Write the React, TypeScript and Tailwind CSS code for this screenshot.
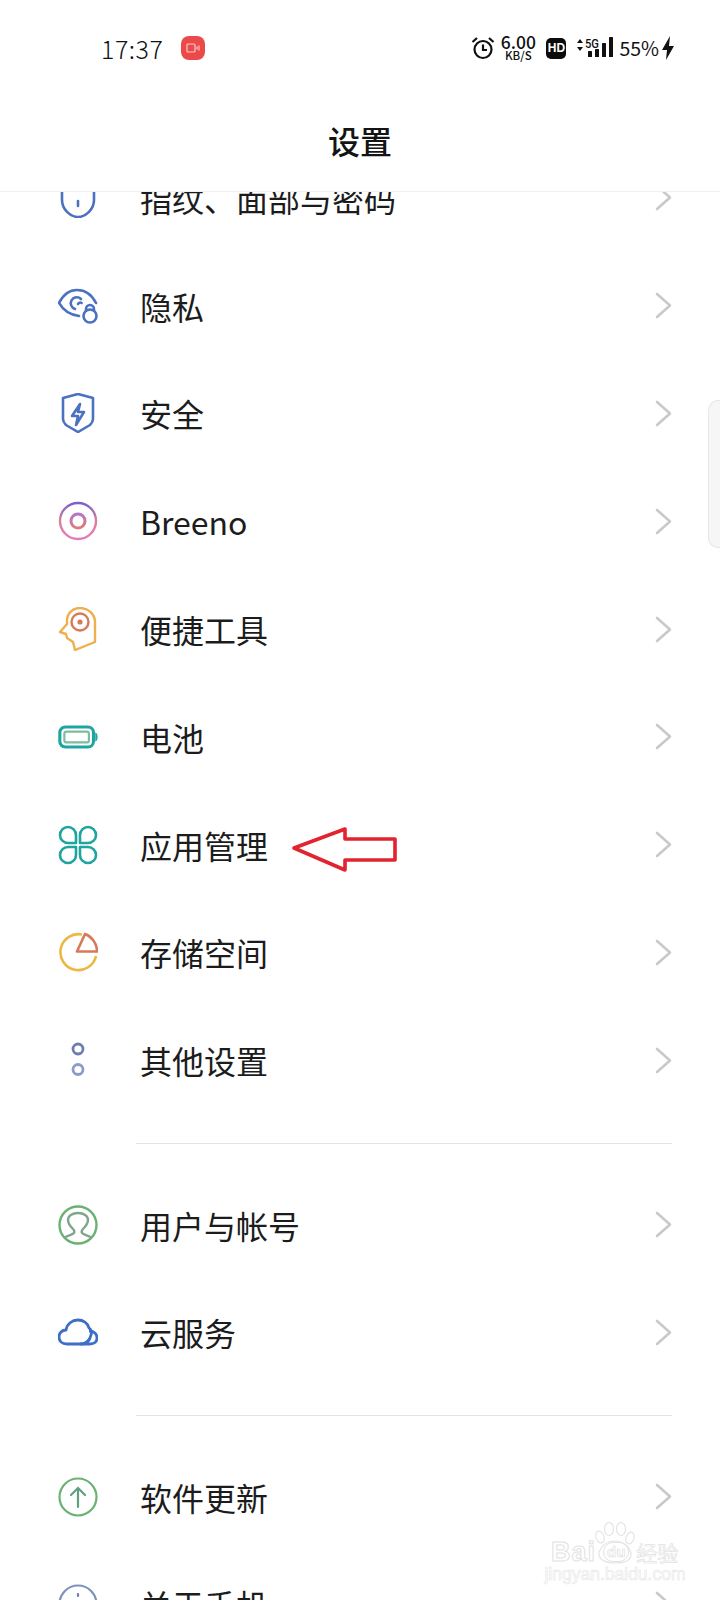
import React from 'react';

const BLUE = '#4a72c0';

const PrivacyIcon = () => (
  <svg viewBox="0 0 40 40" className="w-10 h-10" fill="none" stroke={BLUE} strokeWidth="2.6" strokeLinecap="round">
    <path d="M38 17C34 9 27 4 19 4 11 4 5 9 1 17c4 7 11 12 20 13" />
    <path d="M23 13a6 6 0 1 0-6 10" />
    <path d="M20 18a2.400 2.400 0 0 1 3.600-1" />
    <circle cx="32" cy="30" r="6.500" />
    <path d="M28 24v-1a4 4 0 0 1 8 0v1" />
  </svg>
);

const ShieldBoltIcon = () => (
  <svg viewBox="0 0 40 40" className="w-10 h-10" fill="none" stroke={BLUE} strokeWidth="2.6" strokeLinejoin="round">
    <path d="M20 1 35 5v21c0 3-1 4-3 6l-12 7-12-7c-2-2-3-3-3-6V5z" />
    <path d="M22 11 14 23h6l-2 9 8-13h-6z" />
  </svg>
);

const BreenoIcon = () => (
  <svg viewBox="0 0 40 40" className="w-10 h-10" fill="none">
    <defs>
      <linearGradient id="breenoOuter" x1="0" y1="0" x2="0" y2="1">
        <stop offset="0" stopColor="#7a5fd0" />
        <stop offset="0.5" stopColor="#d8829a" />
        <stop offset="1" stopColor="#e678c0" />
      </linearGradient>
      <linearGradient id="breenoInner" x1="0" y1="0" x2="0" y2="1">
        <stop offset="0" stopColor="#b274c8" />
        <stop offset="1" stopColor="#dc7f7a" />
      </linearGradient>
    </defs>
    <circle cx="20" cy="20" r="18" stroke="url(#breenoOuter)" strokeWidth="2.4" />
    <circle cx="20" cy="20" r="7" stroke="url(#breenoInner)" strokeWidth="3" />
  </svg>
);

const HeadIcon = () => (
  <svg viewBox="0 0 40 44" className="w-10 h-11" fill="none" strokeWidth="2.4" strokeLinejoin="round">
    <path d="M37 35V15C37 7 30 1 22 1 14 1 9 7 9 14v3L2 25l6 2 1 4 6 4 2 8z" stroke="#eeb04e" />
    <circle cx="22" cy="15" r="8.500" stroke="#d67a5a" />
    <circle cx="22" cy="15" r="2.600" fill="#d67a5a" stroke="none" />
  </svg>
);

const BatteryIcon = () => (
  <svg viewBox="0 0 44 26" className="w-11 h-[26px]" fill="none">
    <rect x="2" y="2" width="37" height="22" rx="6" stroke="#1fa5a0" strokeWidth="3.4" />
    <rect x="7" y="7" width="27" height="12" rx="2.500" stroke="#7fbb9f" strokeWidth="2.400" />
    <path d="M41 8c2 .5 2.500 2.500 2.500 5s-.5 4.500-2.500 5z" fill="#1fa5a0" />
  </svg>
);

const AppsIcon = () => (
  <svg viewBox="0 0 40 40" className="w-10 h-10" fill="none" stroke="#1fa5a0" strokeWidth="2.600" strokeLinejoin="round">
    <path d="M18 18h-8a8 8 0 1 1 8-8z" />
    <path d="M22 18h8a8 8 0 1 0-8-8z" />
    <path d="M18 22h-8a8 8 0 1 0 8 8z" />
    <path d="M22 22h8a8 8 0 1 1-8 8z" />
  </svg>
);

const StorageIcon = () => (
  <svg viewBox="0 0 40 40" className="w-10 h-10" fill="none" strokeWidth="2.600">
    <path d="M24 2.500A18 18 0 1 0 38 24" stroke="#ebb840" />
    <path d="M27 2 19 19.500h20C39 11 33 4 27 2z" stroke="#d67a5a" strokeLinejoin="round" />
  </svg>
);

const DotsIcon = () => (
  <svg viewBox="0 0 40 40" className="w-10 h-10" fill="none" strokeWidth="2.800">
    <circle cx="20" cy="9" r="5" stroke="#6c7fae" />
    <circle cx="20" cy="29.500" r="5" stroke="#8a9cc8" />
  </svg>
);

const UserIcon = () => (
  <svg viewBox="0 0 40 40" className="w-10 h-10" fill="none" strokeWidth="2.400">
    <circle cx="20" cy="20" r="18.500" stroke="#69b273" />
    <path
      d="M6 33c4-3 8-3 10-5 1-2 0-3-1-4-3-3-5-6-5-9 0-4 4-7 10-7s10 3 10 7c0 3-2 6-5 9-1 1-2 2-1 4 2 2 6 2 10 5"
      stroke="#7fa58d"
    />
  </svg>
);

const CloudIcon = () => (
  <svg viewBox="0 0 40 28" className="w-10 h-7" fill="none" stroke="#3d6fc7" strokeWidth="2.800" strokeLinejoin="round">
    <path d="M9 26C4 26 1 23 1 19s3-7 7-7c1-6 6-10 12-10 5 0 10 3 11 8 2 1 3 4 2 7-1 5-5 9-10 9z" />
    <path d="M31 13c5 0 8 3 8 7s-3 6-7 6h-9c4 0 8-2 9-6" />
  </svg>
);

const UpdateIcon = () => (
  <svg viewBox="0 0 40 40" className="w-10 h-10" fill="none" strokeWidth="2.200" strokeLinecap="round">
    <circle cx="20" cy="20" r="18.500" stroke="#69b273" />
    <path d="M20 30V11M13 18l7-7 7 7" stroke="#60a080" />
  </svg>
);

const AboutIcon = () => (
  <svg viewBox="0 0 40 40" className="w-10 h-10" fill="none" strokeWidth="2.200" strokeLinecap="round">
    <circle cx="20" cy="20" r="18.500" stroke="#7f92bd" />
    <path d="M20 18v12M20 10v2" stroke="#6c7fae" />
  </svg>
);

const Row = ({ icon, label }: { icon: React.ReactNode; label: string }) => (
  <div className="h-[107.8px] flex items-center pl-[58px] pr-[48px]">
    <div className="w-10 h-10 flex items-center justify-center shrink-0">{icon}</div>
    <span className="ml-[42px] flex-1 text-[32px] leading-none text-[#1c1c1c] font-normal">{label}</span>
    <svg viewBox="0 0 17 27" className="w-[17px] h-[27px]" fill="none" stroke="#c9c9c9" strokeWidth="2.600" strokeLinecap="round" strokeLinejoin="round">
      <path d="M2 2l13 11.500L2 25" />
    </svg>
  </div>
);

const Divider = () => (
  <div className="pt-[28.5px] pb-[27px] pl-[136px] pr-[48px]">
    <div className="h-px bg-[#e3e3e3]" />
  </div>
);

const StatusBar = () => (
  <div className="h-[96px] flex items-center pl-[101px] pr-[46px] text-[#111]">
    <span className="text-[25px] leading-none font-light tracking-[0.5px]">17:37</span>
    <div className="ml-[18px] w-6 h-6 rounded-lg bg-[#ec4a4a] flex items-center justify-center">
      <svg viewBox="0 0 14 10" className="w-[14px] h-[10px]" fill="none" stroke="#f9c9c6" strokeWidth="1.200">
        <rect x="1" y="1" width="8" height="8" rx="1" />
        <path d="M11 3.500v3M13 2.500v5" />
      </svg>
    </div>
    <div className="flex-1" />
    <svg viewBox="0 0 24 24" className="w-6 h-6" fill="none" stroke="#111" strokeWidth="2.200">
      <circle cx="12" cy="13.500" r="8.500" />
      <path d="M12 8.500v5.500h4M1.500 6 6 2M22.500 6 18 2" />
    </svg>
    <div className="ml-[6px] w-[34px] flex flex-col items-center font-medium -mt-[2px]">
      <span className="text-[17.500px] leading-[15px]">6.00</span>
      <span className="text-[11.500px] leading-[12px]">KB/S</span>
    </div>
    <div className="ml-[11px] w-[20px] h-[21px] rounded-[5px] bg-[#0c0c0c] flex items-center justify-center text-white text-[12px] leading-none font-bold [font-family:'Liberation_Sans',sans-serif]">HD</div>
    <svg viewBox="0 0 36 24" className="ml-[11px] w-9 h-6" fill="#111">
      <path d="M3 3 6 7H0zM3 15 0 11h6z" />
      <text x="8" y="12" fontSize="13" fontWeight="500" fontFamily="Roboto, sans-serif" textLength="14" lengthAdjust="spacingAndGlyphs">5G</text>
      <rect x="11" y="15" width="4" height="6" rx="0.500" />
      <rect x="18" y="13" width="4" height="8" rx="0.500" />
      <rect x="25" y="7" width="4" height="14" rx="0.500" />
      <rect x="32" y="1" width="4" height="20" rx="0.500" />
    </svg>
    <span className="ml-[6px] text-[19.500px] leading-none">55%</span>
    <svg viewBox="0 0 12 24" className="ml-[3px] w-3 h-6" fill="#111">
      <path d="M8 0 0 14h5l-1 10 8-14H7z" />
    </svg>
  </div>
);

// watermark sits over the list, bottom right
const Watermark = () => (
  <div className="absolute left-[551px] top-[1522px] w-[128px] h-[60px] flex flex-col items-center text-white [font-family:'Liberation_Sans',sans-serif] [-webkit-text-stroke:1px_#e2e2e2]">
    <svg viewBox="0 0 44 44" className="absolute left-[42px] top-0 w-11 h-11" fill="none" stroke="#e4e4e4" strokeWidth="1.200">
      <ellipse cx="7" cy="15" rx="4" ry="6" transform="rotate(-20 7 15)" />
      <ellipse cx="16" cy="7" rx="4.500" ry="6.500" />
      <ellipse cx="28" cy="7" rx="4.500" ry="6.500" />
      <ellipse cx="37" cy="16" rx="4" ry="6" transform="rotate(20 37 16)" />
      <path d="M6 30c2-6 8-11 16-11s14 5 16 12c1 6-4 10-16 10S5 36 6 30z" />
    </svg>
    <div className="mt-[17px] w-full flex items-center text-[27px] leading-[26px] font-bold whitespace-nowrap">
      <span className="tracking-[1px]">Bai</span>
      <span className="text-[15px] leading-[18px] ml-[7px] px-[3px] rounded-full border border-[#e2e2e2] [-webkit-text-stroke:0.7px_#e2e2e2]">du</span>
      <span className="ml-[7px] text-[21px] leading-[24px] font-normal [font-family:'Noto_Sans_CJK_SC',sans-serif] [-webkit-text-stroke:0.7px_#e2e2e2]">经验</span>
    </div>
    <div className="mt-[2px] text-[17.500px] leading-[15px] whitespace-nowrap [-webkit-text-stroke:0.600px_#e6e6e6]">jingyan.baidu.com</div>
  </div>
);

export default function App() {
  return (
    <div className="relative w-[720px] h-[1600px] overflow-hidden bg-white [font-family:'Noto_Sans_CJK_SC','Noto_Sans',sans-serif]">
      <div className="relative z-10 h-[192px] bg-white border-b border-[#efefef]">
        <StatusBar />
        <div className="h-[95px] flex items-start justify-center">
          <span className="text-[32px] leading-[88px] font-medium text-[#141414]">设置</span>
        </div>
      </div>
      {/* list is scrolled, first row runs under the header */}
      <div className="-mt-[48px]">
        <Row
          label="指纹、面部与密码"
          icon={
            <svg viewBox="0 0 40 40" className="w-10 h-10" fill="none" stroke={BLUE} strokeWidth="2.600">
              <path d="M4 0h32v22c0 9-8 17-16 17S4 31 4 22z" />
              <path d="M20 23v5" strokeLinecap="round" />
            </svg>
          }
        />
        <Row label="隐私" icon={<PrivacyIcon />} />
        <Row label="安全" icon={<ShieldBoltIcon />} />
        <Row label="Breeno" icon={<BreenoIcon />} />
        <Row label="便捷工具" icon={<HeadIcon />} />
        <Row label="电池" icon={<BatteryIcon />} />
        <Row label="应用管理" icon={<AppsIcon />} />
        <Row label="存储空间" icon={<StorageIcon />} />
        <Row label="其他设置" icon={<DotsIcon />} />
        <Divider />
        <Row label="用户与帐号" icon={<UserIcon />} />
        <Row label="云服务" icon={<CloudIcon />} />
        <Divider />
        <Row label="软件更新" icon={<UpdateIcon />} />
        <Row label="关于手机" icon={<AboutIcon />} />
      </div>

      {/* floating side handle */}
      <div className="absolute right-0 top-[400px] w-3 h-[148px] bg-[#f6f6f6] border border-r-0 border-[#e6e6e6] rounded-l-[10px]" />

      {/* red annotation arrow */}
      <svg viewBox="0 0 110 46" className="absolute left-[290px] top-[826px] w-[110px] h-[46px]" fill="none" stroke="#e1242f" strokeWidth="3.600" strokeLinejoin="round">
        <path d="M4 22 55 3v10h50v21H55v10z" />
      </svg>

      <Watermark />
    </div>
  );
}
